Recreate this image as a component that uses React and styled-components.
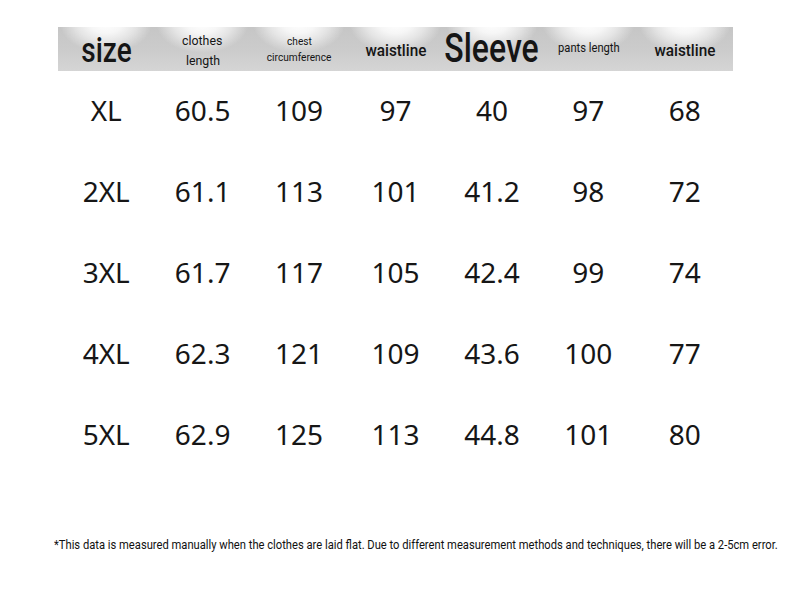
import React from "react";
import styled, { createGlobalStyle } from "styled-components";

const Global = createGlobalStyle`
  html, body { margin: 0; padding: 0; background: #ffffff; }
  body { width: 790px; height: 593px; overflow: hidden; }
`;

const Page = styled.div`
  width: 790px;
  height: 593px;
  box-sizing: border-box;
  padding: 27px 0 0 58px;
  display: flex;
  flex-direction: column;
  background: #fff;
`;

const Table = styled.div`
  width: 675px;
  display: grid;
  grid-template-columns: repeat(7, minmax(0, 1fr));
`;

const HeadCell = styled.div`
  height: 44px;
  min-width: 0;
  box-sizing: border-box;
  display: flex;
  flex-direction: column;
  align-items: center;
  justify-content: ${(p) => p.$justify || "center"};
  padding-top: ${(p) => p.$pt || 0}px;
  padding-bottom: ${(p) => p.$pb || 0}px;
  background:
    radial-gradient(ellipse 46px 30px at 50% -4px, #ffffff 0%, #f6f6f6 35%, #e4e4e4 65%, rgba(204,204,204,0) 100%),
    linear-gradient(180deg, #c6c6c6 0%, #cccccc 55%, #d5d5d5 100%);
`;

const HeadText = styled.span`
  display: block;
  font-family: Roboto, "Liberation Sans", sans-serif;
  font-size: ${(p) => p.$size}px;
  font-weight: ${(p) => p.$weight || 400};
  line-height: ${(p) => p.$lh || 1.05};
  color: #151515;
  white-space: nowrap;
  transform: scaleX(${(p) => p.$sx || 1});
  transform-origin: center;
`;

const Cell = styled.div`
  height: 81px;
  min-width: 0;
  box-sizing: border-box;
  padding-bottom: 4px;
  display: flex;
  align-items: center;
  justify-content: center;
  font-family: "Noto Sans", "Open Sans", sans-serif;
  font-size: 28px;
  font-weight: 400;
  color: #161616;
`;

const Note = styled.div`
  margin: 61px 0 0 -4px;
  font-family: Roboto, "Liberation Sans", sans-serif;
  font-size: 13px;
  color: #111;
  white-space: nowrap;
  transform: scaleX(${(p) => p.$sx});
  transform-origin: left center;
`;

const rows = [
  ["XL", "60.5", "109", "97", "40", "97", "68"],
  ["2XL", "61.1", "113", "101", "41.2", "98", "72"],
  ["3XL", "61.7", "117", "105", "42.4", "99", "74"],
  ["4XL", "62.3", "121", "109", "43.6", "100", "77"],
  ["5XL", "62.9", "125", "113", "44.8", "101", "80"],
];

export default function App() {
  return (
    <>
      <Global />
      <Page>
        <Table>
          <HeadCell $justify="flex-end" $pb={1}>
            <HeadText $size={35} $weight={500} $sx={0.8}>size</HeadText>
          </HeadCell>
          <HeadCell $justify="flex-start" $pt={4}>
            <HeadText $size={13} $lh={1.5} $sx={0.95}>clothes</HeadText>
            <HeadText $size={13} $lh={1.5} $sx={0.95}>length</HeadText>
          </HeadCell>
          <HeadCell $justify="flex-start" $pt={7}>
            <HeadText $size={11} $lh={1.45} $sx={0.92}>chest</HeadText>
            <HeadText $size={11} $lh={1.45} $sx={0.92}>circumference</HeadText>
          </HeadCell>
          <HeadCell $pt={3}>
            <HeadText $size={17} $weight={500} $sx={0.9}>waistline</HeadText>
          </HeadCell>
          <HeadCell $justify="flex-end" $pb={1}>
            <HeadText $size={41} $weight={500} $sx={0.78}>Sleeve</HeadText>
          </HeadCell>
          <HeadCell $justify="flex-start" $pt={14}>
            <HeadText $size={13} $sx={0.86}>pants length</HeadText>
          </HeadCell>
          <HeadCell $pt={3}>
            <HeadText $size={17} $weight={500} $sx={0.9}>waistline</HeadText>
          </HeadCell>
          {rows.map((r, i) =>
            r.map((v, j) => <Cell key={i + "-" + j}>{v}</Cell>)
          )}
        </Table>
        <Note $sx={0.86}>
          *This data is measured manually when the clothes are laid flat. Due to different measurement methods and techniques, there will be a 2-5cm error.
        </Note>
      </Page>
    </>
  );
}
